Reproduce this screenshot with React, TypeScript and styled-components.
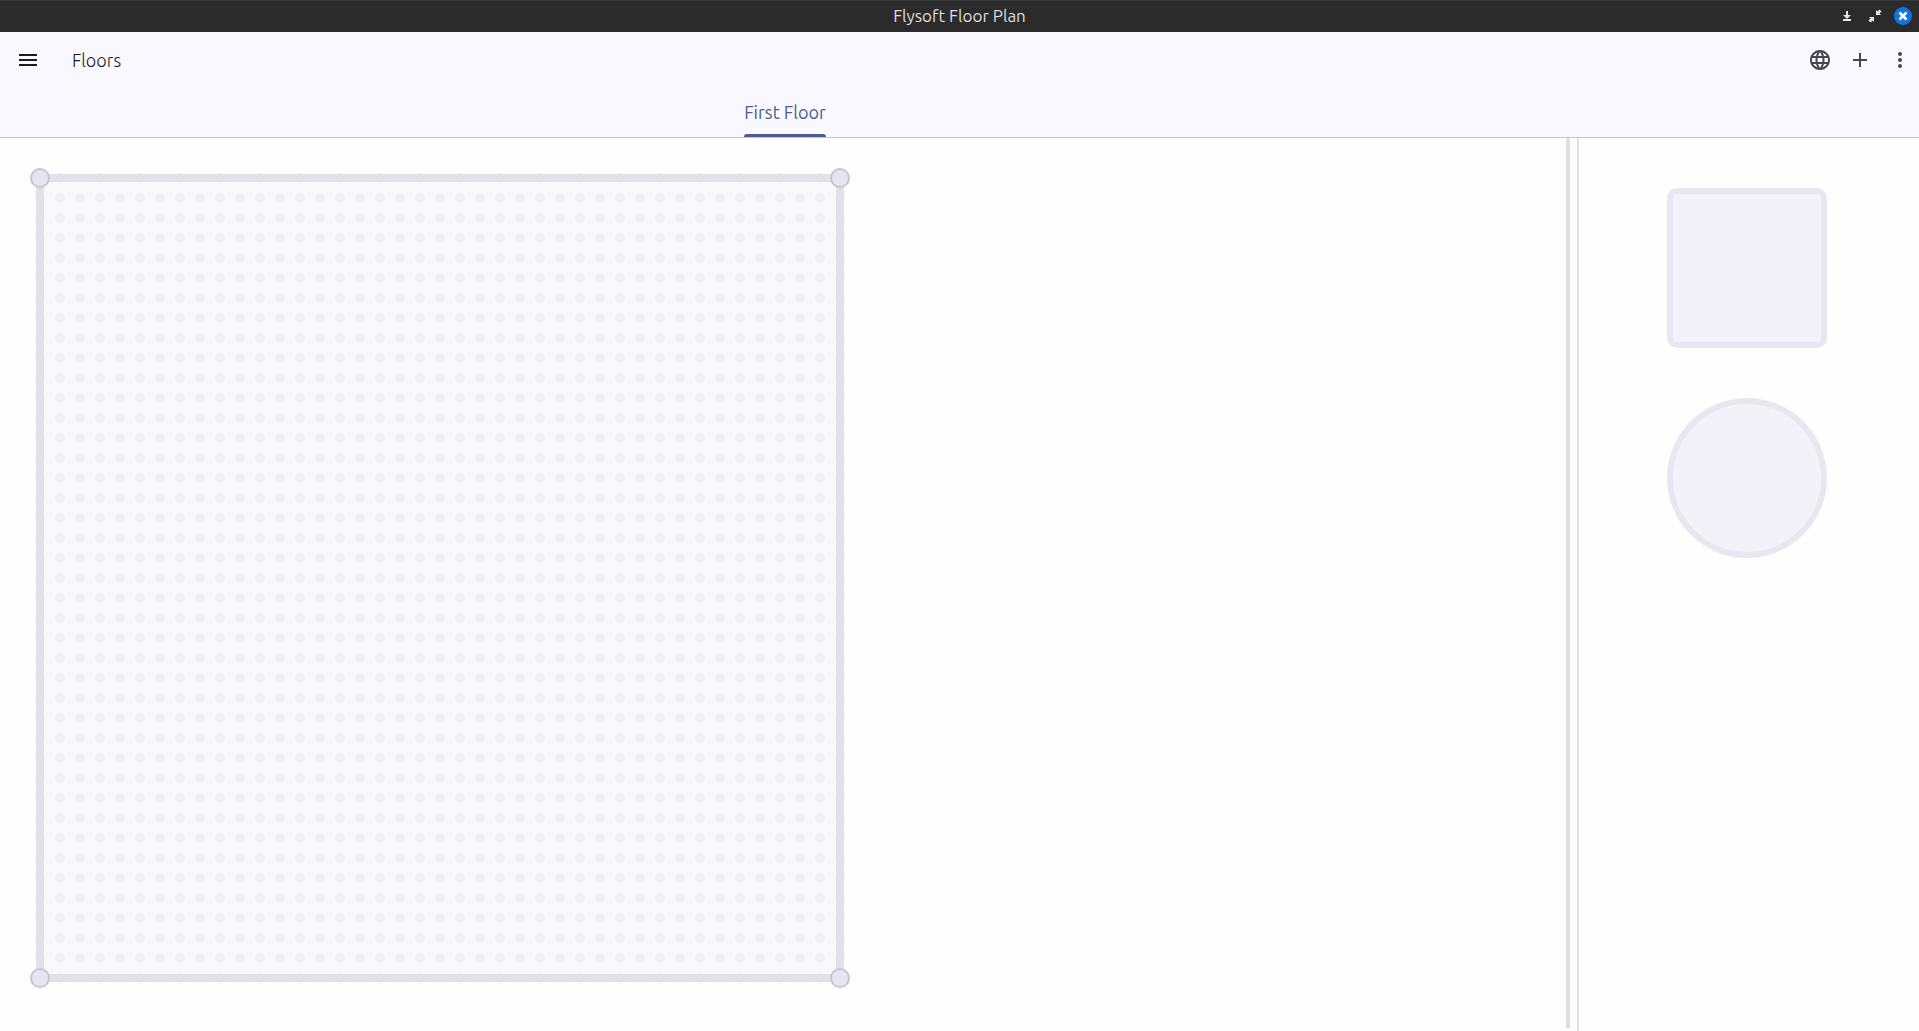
import React from "react";
import styled, { createGlobalStyle } from "styled-components";
import { MdMenu, MdLanguage, MdAdd, MdMoreVert } from "react-icons/md";

const GlobalStyle = createGlobalStyle`
  * { box-sizing: border-box; }
  body {
    margin: 0;
    background: #fefefe;
    color: #1b1b21;
    font-family: Ubuntu, "Noto Sans", "Open Sans", sans-serif;
    font-size: 18px;
  }
  button {
    margin: 0;
    padding: 0;
    border: 0;
    background: none;
    color: inherit;
    font: inherit;
    cursor: pointer;
  }
  svg { display: block; }
`;

const Window = styled.div`
  display: flex;
  flex-direction: column;
  min-height: 100vh;
`;

const TitleBar = styled.header`
  display: grid;
  grid-template-columns: 1fr auto 1fr;
  align-items: center;
  height: 32px;
  padding: 0 7px;
  box-shadow: inset 0 1px #393939;
  background: #2b2b2b;
  color: #dfdfdf;
`;

const WindowTitle = styled.div`
  grid-column: 2;
  font-size: 17px;
  line-height: 24px;
`;

const WindowControls = styled.div`
  display: flex;
  justify-content: flex-end;
  gap: 10px;
`;

const WindowButton = styled.button<{ $accent?: boolean }>`
  width: 18px;
  height: 18px;
  border-radius: 50%;
  background: ${(p) => (p.$accent ? "#0f74e0" : "transparent")};
`;

const AppBar = styled.div`
  border-bottom: 1px solid #c7c5d0;
  background: #f9f8ff;
`;

const Toolbar = styled.div`
  display: flex;
  align-items: center;
  height: 56px;
  padding: 0 7px 0 16px;
`;

const IconButton = styled.button<{ $strong?: boolean }>`
  width: 24px;
  height: 24px;
  color: ${(p) => (p.$strong ? "#1b1b21" : "#46464f")};
`;

const PageTitle = styled.h1`
  flex: 1;
  margin: 0 0 0 32px;
  font-size: 18px;
  font-weight: 300;
  line-height: 24px;
`;

const Actions = styled.div`
  display: flex;
  gap: 16px;
`;

const Columns = styled.div`
  display: grid;
  grid-template-columns: 9fr 2fr;
`;

const Tabs = styled.div`
  display: flex;
  justify-content: center;
  height: 49px;
`;

const Tab = styled.button`
  display: flex;
  flex-direction: column;
  justify-content: flex-end;
  color: #4b5c92;
  line-height: 24px;

  &::after {
    content: "";
    width: 100%;
    height: 3px;
    margin-top: 10px;
    border-radius: 3px 3px 0 0;
    background: #4b5c92;
  }
`;

const Workspace = styled(Columns)`
  flex: 1;
`;

const Canvas = styled.main`
  display: flex;
  justify-content: space-between;
  padding-left: 20px;
`;

const Plan = styled.svg`
  margin-top: 20px;
`;

const ScrollThumb = styled.div`
  width: 4px;
  margin-bottom: 3px;
  background: #dedede;
`;

const Palette = styled.aside`
  display: flex;
  flex-direction: column;
  align-items: center;
  gap: 50px;
  margin-left: 7px;
  padding: 50px 5px 50px 0;
  border-left: 2px solid #e2e1ea;
`;

const Shape = styled.button<{ $round?: boolean }>`
  width: 160px;
  height: 160px;
  border: 6px solid #e8e7ef;
  border-radius: ${(p) => (p.$round ? "50%" : "10px")};
  background: #f3f2f9;
`;

const CORNERS = [
  [20, 20],
  [820, 20],
  [20, 820],
  [820, 820],
];

function FloorPlan() {
  return (
    <Plan width="840" height="840" viewBox="0 0 840 840" role="img" aria-label="First Floor">
      <defs>
        <pattern id="dots" x="10" y="10" width="20" height="20" patternUnits="userSpaceOnUse">
          <circle cx="10" cy="10" r="5" fill="#f0eff6" />
        </pattern>
      </defs>
      <rect x="20" y="20" width="800" height="800" fill="#f9f9fc" />
      <rect x="10" y="10" width="820" height="820" fill="url(#dots)" />
      <rect x="20" y="20" width="800" height="800" fill="none" stroke="#e2e1e8" strokeWidth="8" />
      {CORNERS.map(([x, y]) => (
        <circle key={`${x}-${y}`} cx={x} cy={y} r="9" fill="#e6e5f0" stroke="#c7c5d0" strokeWidth="2" />
      ))}
    </Plan>
  );
}

export default function App() {
  return (
    <Window>
      <GlobalStyle />
      <TitleBar>
        <WindowTitle>Flysoft Floor Plan</WindowTitle>
        <WindowControls>
          <WindowButton aria-label="Minimize">
            <svg width="18" height="18" viewBox="0 0 18 18" fill="#e6e6e6">
              <path d="M8 4h2v4h3l-4 4-4-4h3zM5 12h8v2H5z" />
            </svg>
          </WindowButton>
          <WindowButton aria-label="Restore">
            <svg width="18" height="18" viewBox="0 0 18 18" fill="#e6e6e6">
              <path d="M10 3l1.500 1.500L13.500 2.500 15.500 4.500 13.500 6.500 15 8h-5zM3 10h5v5l-1.500-1.500-2 2-2-2 2-2z" />
            </svg>
          </WindowButton>
          <WindowButton aria-label="Close" $accent>
            <svg width="18" height="18" viewBox="0 0 18 18" stroke="#ffffff" strokeWidth="2.600">
              <path d="M5.500 5.500l7 7M12.500 5.500l-7 7" />
            </svg>
          </WindowButton>
        </WindowControls>
      </TitleBar>
      <AppBar>
        <Toolbar>
          <IconButton aria-label="Menu" $strong>
            <MdMenu size={24} />
          </IconButton>
          <PageTitle>Floors</PageTitle>
          <Actions>
            <IconButton aria-label="Language">
              <MdLanguage size={24} />
            </IconButton>
            <IconButton aria-label="Add floor">
              <MdAdd size={24} />
            </IconButton>
            <IconButton aria-label="More options">
              <MdMoreVert size={24} />
            </IconButton>
          </Actions>
        </Toolbar>
        <Columns>
          <Tabs role="tablist">
            <Tab role="tab" aria-selected="true">
              First Floor
            </Tab>
          </Tabs>
        </Columns>
      </AppBar>
      <Workspace>
        <Canvas>
          <FloorPlan />
          <ScrollThumb />
        </Canvas>
        <Palette>
          <Shape aria-label="Square" />
          <Shape aria-label="Circle" $round />
        </Palette>
      </Workspace>
    </Window>
  );
}
